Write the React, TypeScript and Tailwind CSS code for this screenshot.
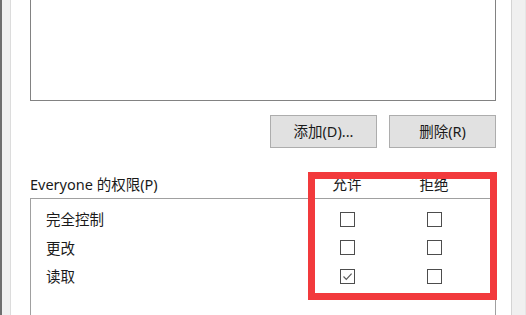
import React from "react";

const font = { fontFamily: '"Noto Sans", "Noto Sans CJK SC", sans-serif' };

function Box({ checked }: { checked?: boolean }) {
  return (
    <div className="w-[15px] h-[15px] border border-[#4d4d4d] bg-white flex items-center justify-center">
      {checked && (
        <svg width="11" height="11" viewBox="0 0 11 11">
          <path d="M1.5 5.5 L4.3 8.3 L9.6 2.6" fill="none" stroke="#5c5c5c" strokeWidth="1.2" />
        </svg>
      )}
    </div>
  );
}

const rows = [
  { label: "完全控制", allow: false, deny: false },
  { label: "更改", allow: false, deny: false },
  { label: "读取", allow: true, deny: false },
];

export default function App() {
  return (
    <div
      className="relative w-[526px] h-[315px] overflow-hidden flex bg-[#f0f0f0] text-[14.5px] text-[#1a1a1a]"
      style={font}
    >
      {/* left window frame */}
      <div className="w-[2px] bg-[#6e6e6e]" />
      <div className="w-[8px] bg-[#f0f0f0]" />
      <div className="w-[1px] bg-[#dcdcdc]" />

      {/* tab page */}
      <div className="w-[500px] bg-white flex flex-col pl-[19px] pr-[15px]">
        <div className="h-[101px] border border-t-0 border-[#828282] bg-white" />

        <div className="flex justify-end gap-[12px] mt-[14px]">
          <button className="w-[107px] h-[33px] bg-[#e1e1e1] border border-[#adadad] leading-none">
            添加(D)...
          </button>
          <button className="w-[107px] h-[33px] bg-[#e1e1e1] border border-[#adadad] leading-none">
            删除(R)
          </button>
        </div>

        <div className="flex items-center h-[20px] mt-[26px] mb-[4px] leading-[20px]">
          <div className="w-[287px]">Everyone 的权限(P)</div>
          <div className="w-[60px] text-center">允许</div>
          <div className="w-[27px]" />
          <div className="w-[60px] text-center">拒绝</div>
        </div>

        <div className="flex-1 border border-b-0 border-[#a0a0a0] pt-[6px] pl-[15px]">
          {rows.map((r) => (
            <div key={r.label} className="flex items-center h-[28.5px] leading-[20px]">
              <div className="w-[271px]">{r.label}</div>
              <div className="w-[60px] flex justify-center">
                <Box checked={r.allow} />
              </div>
              <div className="w-[27px]" />
              <div className="w-[60px] flex justify-center">
                <Box checked={r.deny} />
              </div>
            </div>
          ))}
        </div>
      </div>

      {/* right window frame */}
      <div className="w-[1px] bg-[#d4d4d4]" />
      <div className="flex-1 bg-[#f0f0f0] border-r border-[#e6e6e6]" />

      {/* red annotation */}
      <div className="absolute left-[308px] top-[172px] w-[189px] h-[128px] border-[7px] border-[#f23a3c]" />
    </div>
  );
}
